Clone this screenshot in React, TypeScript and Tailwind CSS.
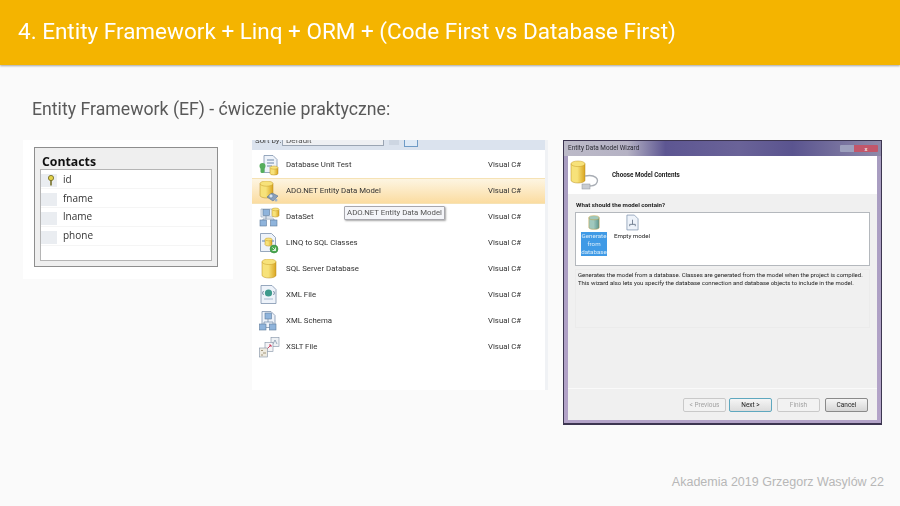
import React from "react";

function Cyl({ x, y, w, h, from = "#f7e27a", to = "#d9a520", id }: { x: number; y: number; w: number; h: number; from?: string; to?: string; id: string }) {
  const ry = w / 5;
  return (
    <g>
      <defs>
        <linearGradient id={id} x1="0" x2="1" y1="0" y2="0">
          <stop offset="0" stopColor={from} />
          <stop offset="0.45" stopColor={from} />
          <stop offset="1" stopColor={to} />
        </linearGradient>
      </defs>
      <path d={`M${x} ${y + ry}V${y + h - ry}A${w / 2} ${ry} 0 0 0 ${x + w} ${y + h - ry}V${y + ry}Z`} fill={`url(#${id})`} stroke="#b68a1e" strokeWidth="0.5" />
      <ellipse cx={x + w / 2} cy={y + ry} rx={w / 2} ry={ry} fill={from} stroke="#c79c2c" strokeWidth="0.5" />
    </g>
  );
}

function Doc({ x, y, w, h }: { x: number; y: number; w: number; h: number }) {
  return (
    <path
      d={`M${x} ${y}H${x + w - 4}L${x + w} ${y + 4}V${y + h}H${x}Z`}
      fill="#eef3fa"
      stroke="#7f93ad"
      strokeWidth="0.8"
    />
  );
}

function Box({ x, y, c = "#8fb4dc" }: { x: number; y: number; c?: string }) {
  return <rect x={x} y={y} width="6.5" height="6" fill={c} stroke="#5f7c9c" strokeWidth="0.6" />;
}

function RowIcon({ kind }: { kind: string }) {
  const inner: Record<string, React.ReactNode> = {
    unit: (
      <>
        <Doc x={5} y={0.5} w={13} h={17} />
        <path d="M8 5h7M8 8h7M8 11h5" stroke="#6d86a6" strokeWidth="1" />
        <circle cx="3.5" cy="11" r="3" fill="#55ad5c" />
        <rect x="1.5" y="12" width="4" height="6" rx="1.5" fill="#55ad5c" />
        <Cyl id="c1" x={11} y={11} w={8} h={9} />
      </>
    ),
    ado: (
      <>
        <Cyl id="c2" x={1} y={0} w={13} h={17} />
        <path d="M8 16l5-4 6 3-5 5z" fill="#8aa0bd" stroke="#58708f" strokeWidth="0.6" />
        <circle cx="12" cy="15" r="2" fill="#d7e4f2" stroke="#58708f" strokeWidth="0.5" />
        <circle cx="17" cy="19" r="1.5" fill="#9fb2c8" />
      </>
    ),
    dataset: (
      <>
        <path d="M2 2h12v8H2z" fill="#e9eff7" stroke="#8a9fb8" strokeWidth="0.6" />
        <Box x={4} y={2.5} />
        <Cyl id="c3" x={13} y={1} w={7} h={9} />
        <path d="M7 9v3M4 12h11v2M4 12v2" stroke="#6f86a3" strokeWidth="0.7" fill="none" />
        <Box x={1} y={13} />
        <Box x={11.5} y={13} />
      </>
    ),
    linq: (
      <>
        <Doc x={1.5} y={0.5} w={15} h={18} />
        <Cyl id="c4" x={6} y={5} w={7} h={8} />
        <path d="M3 8h3M13 8h2" stroke="#5f86b2" strokeWidth="1.2" />
        <circle cx="15" cy="16" r="4" fill="#4aa94f" stroke="#2f8036" strokeWidth="0.5" />
        <path d="M13.5 14.5l3 3M13.5 17.5h3v-3" stroke="#fff" strokeWidth="0.8" fill="none" />
      </>
    ),
    sql: <Cyl id="c5" x={3} y={0} w={14} h={19} />,
    xml: (
      <>
        <Doc x={2} y={0.5} w={15} h={18} />
        <circle cx="9.5" cy="8" r="3.6" fill="#3e9a8c" />
        <path d="M4.5 6L3.5 8l1 2M14.5 6l1 2-1 2" stroke="#47617f" strokeWidth="0.7" fill="none" />
        <path d="M5 14h9" stroke="#a9bbd0" strokeWidth="1" />
      </>
    ),
    schema: (
      <>
        <Doc x={3} y={0.5} w={13} h={16} />
        <Box x={6} y={2} />
        <path d="M9 8v3M5 11h9v2M5 11v2" stroke="#6f86a3" strokeWidth="0.7" fill="none" />
        <Box x={0.5} y={13} />
        <Box x={10.5} y={13} />
      </>
    ),
    xslt: (
      <>
        <rect x="12" y="0.5" width="8" height="9" fill="#eef1f4" stroke="#8090a3" strokeWidth="0.6" />
        <path d="M14 7l2-4 2 4" stroke="#7b8ea5" strokeWidth="0.7" fill="none" />
        <rect x="6" y="5.5" width="8" height="9" fill="#f4f4f6" stroke="#8090a3" strokeWidth="0.6" />
        <path d="M8 12l4-4M10 8h2v2" stroke="#c8385a" strokeWidth="0.9" fill="none" />
        <rect x="0.5" y="11" width="8" height="9" fill="#eeeadf" stroke="#8090a3" strokeWidth="0.6" />
        <path d="M2 13.5h2M4 16h3M2 18h2" stroke="#9b8f70" strokeWidth="0.9" />
      </>
    ),
  };
  return (
    <svg viewBox="0 0 21 21" className="w-[21px] h-[21px] shrink-0">
      {inner[kind]}
    </svg>
  );
}

const rows = [
  ["unit", "Database Unit Test"],
  ["ado", "ADO.NET Entity Data Model"],
  ["dataset", "DataSet"],
  ["linq", "LINQ to SQL Classes"],
  ["sql", "SQL Server Database"],
  ["xml", "XML File"],
  ["schema", "XML Schema"],
  ["xslt", "XSLT File"],
];

function ContactsImage() {
  return (
    <div className="w-[210px] h-[139px] bg-white pt-[7px] pl-[11px] shrink-0">
      <div className="w-[184px] h-[120px] bg-[#efefef] border border-[#8e8e8e] px-[5px] flex flex-col">
        <div className="h-[21px] pt-[6px] pl-[2px] text-[12.3px] leading-[16px] font-bold text-[#111] font-['Open_Sans',sans-serif] blur-[0.3px]">Contacts</div>
        <div className="h-[92px] bg-white border border-[#b5b5b5] flex flex-col">
          {["id", "fname", "lname", "phone"].map((n, i) => (
            <div key={n} className="h-[19px] flex border-b border-[#f5f5f5]">
              <div className="w-[16px] h-[13px] mt-[4px] bg-[#eaedf1] flex items-center justify-end pr-[2px]">
                {i === 0 && (
                  <svg viewBox="0 0 8 11" className="w-[8px] h-[11px]">
                    <circle cx="4" cy="3" r="2.6" fill="#e3d24a" stroke="#77702a" strokeWidth="0.9" />
                    <path d="M4 5v5.5" stroke="#77702a" strokeWidth="1.6" />
                  </svg>
                )}
              </div>
              <div className={"pl-[6px] text-[10px] text-[#333] font-['Open_Sans',sans-serif] blur-[0.25px] " + (i < 2 ? "leading-[19px]" : "leading-[17px]")}>{n}</div>
            </div>
          ))}
        </div>
      </div>
    </div>
  );
}

function TemplatesImage() {
  return (
    <div className="w-[296px] h-[250px] bg-white shrink-0 flex flex-col relative font-['Roboto',sans-serif] text-[7.8px] text-[#333] border-r-[3px] border-[#f0f2f5]">
      <div className="h-[10px] bg-[#dbe3ee] flex items-start pl-[3px] overflow-hidden">
        <span className="text-[#444] leading-[2px] w-[27px] blur-[0.3px]">Sort by:</span>
        <div className="w-[102px] h-[6px] bg-[#eef0f3] border border-t-0 border-[#9aa5b3] rounded-b-[1px] text-[8px] leading-[2px] pl-[3px] text-[#555] blur-[0.3px]">Default</div>
        <div className="ml-[5px] w-[10px] h-[5px] bg-[#cdd6e2]" />
        <div className="ml-[5px] w-[14px] h-[7px] bg-[#dfeaf6] border border-t-0 border-[#6f9bc6]" />
      </div>
      <div className="pt-[2px] flex flex-col">
        {rows.map(([k, t], i) => (
          <div
            key={k}
            className={
              i === 1
                ? "h-[26px] flex items-center pl-[7px] bg-gradient-to-b from-[#fdf5e2] to-[#fbdca0] border-y border-[#f6e2b4]"
                : "h-[26px] flex items-center pl-[7px]"
            }
          >
            <RowIcon kind={k} />
            <span className="ml-[6px] w-[202px] blur-[0.25px]">{t}</span>
            <span className="blur-[0.25px]">Visual C#</span>
          </div>
        ))}
      </div>
      <div className="absolute left-[92px] top-[66px] w-[101px] h-[14px] bg-[#f4f5f9] border border-[#a7a7ad] rounded-[1px] shadow-[1px_1px_2px_rgba(0,0,0,0.35)] text-center leading-[12px] text-[#555] whitespace-nowrap blur-[0.25px]">
        ADO.NET Entity Data Model
      </div>
    </div>
  );
}

function WizBtn({ label, on }: { label: string; on?: boolean }) {
  return (
    <div
      className={
        "w-[43px] h-[14px] rounded-[2px] border text-center text-[6.5px] leading-[12px] blur-[0.2px] " +
        (on === undefined
          ? "border-[#c9c9c9] bg-[#f2f2f2] text-[#a3a3a3]"
          : on
            ? "border-[#5fa8bf] bg-gradient-to-b from-[#f5f5f5] to-[#dcdcdc] text-[#222]"
            : "border-[#8a8a8a] bg-gradient-to-b from-[#f5f5f5] to-[#d6d6d6] text-[#222]")
      }
    >
      {label}
    </div>
  );
}

function WizardImage() {
  return (
    <div className="w-[319px] h-[285px] shrink-0 flex flex-col bg-gradient-to-b from-[#a79cc0] to-[#b3a3c8] border border-[#3c3550] border-b-[2px] px-[4px] pb-[3px] font-['Roboto',sans-serif] text-[#222]">
      <div className="h-[15px] -mx-[4px] bg-[linear-gradient(90deg,#bcbac8_0%,#b5b2c4_20%,#5d5692_32%,#6a6398_55%,#5a548f_72%,#8f8aaa_100%)] flex items-center pl-[4px] pr-[3px] justify-between">
        <span className="text-[6.4px] text-[#2a2a33] blur-[0.25px]">Entity Data Model Wizard</span>
        <div className="w-[38px] h-[7px] flex rounded-[1px] overflow-hidden">
          <div className="w-[14px] bg-[#9da0bd]" />
          <div className="w-[24px] bg-[#c2566a] text-white text-[6px] leading-[7px] text-center">x</div>
        </div>
      </div>
      <div className="flex-1 flex flex-col bg-[#f0f0f0]">
        <div className="h-[38px] bg-white flex items-center pl-[2px] shrink-0">
          <svg viewBox="0 0 32 30" className="w-[32px] h-[30px] shrink-0">
            <Cyl id="w1" x={1} y={1} w={14} h={22} />
            <path d="M15 16c10-2 15 3 11 8-2 2-5 2-7 2" stroke="#a8adb4" strokeWidth="1.3" fill="none" />
            <rect x="12" y="24" width="8" height="5" fill="#c8ccd2" stroke="#8d939b" strokeWidth="0.5" />
          </svg>
          <span className="ml-[10px] mt-[2px] text-[6.3px] font-bold blur-[0.2px]">Choose Model Contents</span>
        </div>
        <div className="px-[7px] pt-[6px] flex flex-col flex-1">
          <div className="pl-[1px] h-[11px] text-[6.2px] leading-[11px] font-bold blur-[0.2px]">What should the model contain?</div>
          <div className="mt-[1px] h-[54px] bg-white border border-[#b4b8bd] flex pl-[5px] pt-[1px] gap-[7px]">
            <div className="w-[26px] flex flex-col items-center">
              <svg viewBox="0 0 14 18" className="w-[12px] h-[17px]">
                <Cyl id="w2" x={1} y={1} w={12} h={16} from="#a0c8bd" to="#5d968f" />
              </svg>
              <div className="mt-[1px] h-[24px] w-[26px] bg-[#3f9ae6] text-[#d8ecfa] text-center text-[6.2px] leading-[8px] blur-[0.2px]">
                Generate from database
              </div>
            </div>
            <div className="w-[36px] flex flex-col items-center">
              <svg viewBox="0 0 14 18" className="w-[13px] h-[17px]">
                <Doc x={1} y={1} w={12} h={16} />
                <path d="M4 11h6M4 11v2M10 11v2M7 6v5" stroke="#6f7d90" strokeWidth="1" fill="none" />
              </svg>
              <div className="mt-[1px] text-[6.2px] leading-[8px] whitespace-nowrap blur-[0.2px]">Empty model</div>
            </div>
          </div>
          <div className="mt-[3px] h-[59px] border border-[#ebebeb] px-[2px] pt-[1px] text-[6px] leading-[8px] blur-[0.2px]">
            <div className="whitespace-nowrap">Generates the model from a database. Classes are generated from the model when the project is compiled.</div>
            <div className="whitespace-nowrap">This wizard also lets you specify the database connection and database objects to include in the model.</div>
          </div>
        </div>
        <div className="h-[32px] border-t border-[#fafafa] flex items-start justify-end gap-[5px] pr-[9px] pt-[9px] shrink-0">
          <div className="-mr-[2px]">
            <WizBtn label="< Previous" />
          </div>
          <WizBtn label="Next >" on />
          <WizBtn label="Finish" />
          <WizBtn label="Cancel" on={false} />
        </div>
      </div>
    </div>
  );
}

export default function App() {
  return (
    <div className="w-[900px] h-[506px] bg-[#fafafa] flex flex-col overflow-hidden">
      <header className="h-[65px] shrink-0 bg-[#f4b400] shadow-[0_1px_2px_rgba(0,0,0,0.35)] flex items-center pl-[18px] pb-[1px]">
        <h1 className="text-white text-[22.5px] font-['Roboto',sans-serif] whitespace-nowrap blur-[0.2px]">
          4. Entity Framework + Linq + ORM + (Code First vs Database First)
        </h1>
      </header>
      <p className="mt-[33px] ml-[32px] h-[22px] text-[17.7px] leading-[22px] text-[#595959] font-['Roboto',sans-serif] blur-[0.2px]">
        Entity Framework (EF) - ćwiczenie praktyczne:
      </p>
      <main className="mt-[20px] ml-[23px] flex items-start">
        <ContactsImage />
        <div className="ml-[19px]">
          <TemplatesImage />
        </div>
        <div className="ml-[15px]">
          <WizardImage />
        </div>
      </main>
      <footer className="mt-auto mb-[16px] mr-[16px] text-right text-[12.5px] leading-[16px] text-[#b7b7b7] font-['Liberation_Sans',sans-serif]">
        Akademia 2019 Grzegorz Wasylów 22
      </footer>
    </div>
  );
}
